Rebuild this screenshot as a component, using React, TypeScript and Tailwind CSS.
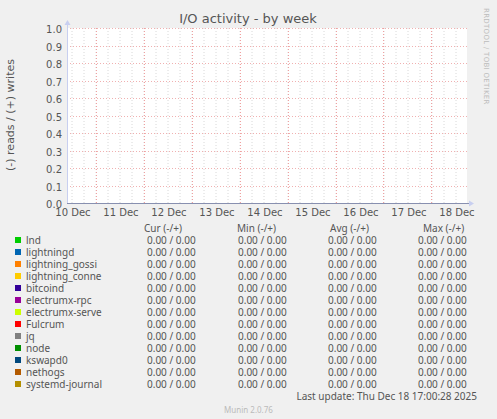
const rows: [string, string][] = [
  ["lnd", "#00cc00"],
  ["lightningd", "#0066b3"],
  ["lightning_gossi", "#ff8000"],
  ["lightning_conne", "#ffcc00"],
  ["bitcoind", "#330099"],
  ["electrumx-rpc", "#990099"],
  ["electrumx-serve", "#ccff00"],
  ["Fulcrum", "#ff0000"],
  ["jq", "#808080"],
  ["node", "#008f00"],
  ["kswapd0", "#00487d"],
  ["nethogs", "#b35a00"],
  ["systemd-journal", "#b38f00"],
];

const days = ["10 Dec", "11 Dec", "12 Dec", "13 Dec", "14 Dec", "15 Dec", "16 Dec", "17 Dec", "18 Dec"];

function Chart() {
  const left = 67;
  const right = 467;
  const top = 28;
  const bottom = 203;
  const step = (bottom - top) / 10;
  const minor: number[] = [];
  for (let x = 72; x < right; x += 12) minor.push(x);
  const major: number[] = [];
  for (let x = 96; x < right; x += 47.9) major.push(x);
  return (
    <svg width="497" height="220" className="block" fontFamily="'DejaVu Sans', sans-serif">
      <text x="248" y="23" textAnchor="middle" fontSize="13" fill="#555">I/O activity - by week</text>
      <text transform="translate(14 115) rotate(-90)" textAnchor="middle" fontSize="11" fill="#555">
        (-) reads / (+) writes
      </text>
      <text transform="translate(484 8) rotate(90)" fontSize="7" fill="#bbb" letterSpacing="0.3">
        RRDTOOL / TOBI OETIKER
      </text>
      <rect x={left} y={top} width={right - left} height={bottom - top} fill="#fff" />
      {minor.map((x) => (
        <line key={"m" + x} x1={x} x2={x} y1={top} y2={bottom} stroke="#d8d8d8" strokeWidth="1" strokeDasharray="1 2" />
      ))}
      {major.map((x) => (
        <line key={"d" + x} x1={Math.round(x) + 0.5} x2={Math.round(x) + 0.5} y1={top} y2={bottom} stroke="#f0a0a0" strokeDasharray="1 2" />
      ))}
      {Array.from({ length: 11 }, (_, i) => {
        const y = Math.round(bottom - i * step) + 0.5;
        return (
          <g key={i}>
            {i > 0 && <line x1={left} x2={right} y1={y} y2={y} stroke="#f0b0b0" strokeDasharray="1 2" />}
            <text x="62" y={y + 4} textAnchor="end" fontSize="10" fill="#555">
              {(i / 10).toFixed(1)}
            </text>
          </g>
        );
      })}
      <line x1={left + 0.5} x2={left + 0.5} y1={top - 4} y2={bottom} stroke="#c8cff0" />
      <line x1={left} x2={right + 3} y1={bottom + 0.5} y2={bottom + 0.5} stroke="#8890b0" />
      <polygon points={`${left - 2.5},${top - 3} ${left + 3.5},${top - 3} ${left + 0.5},${top - 8}`} fill="#c8cff0" />
      <polygon points={`${right + 2},${bottom - 2.5} ${right + 2},${bottom + 3.5} ${right + 7},${bottom + 0.5}`} fill="#c8cff0" />
      {days.map((d, i) => (
        <text key={d} x={73 + i * 48} y="216" textAnchor="middle" fontSize="10" fill="#555">
          {d}
        </text>
      ))}
    </svg>
  );
}

export default function App() {
  const v = "0.00 / 0.00";
  return (
    <div className="w-[497px] h-[419px] bg-[#f0f0f0] overflow-hidden">
      <Chart />
      <div className="font-['DejaVu_Sans_Mono'] text-[10px] leading-[12px] text-[#555] whitespace-pre mt-[2px]">
        <div className="flex">
          <span className="w-[144px]" />
          <span className="w-[93px]">Cur (-/+)</span>
          <span className="w-[93px]">Min (-/+)</span>
          <span className="w-[93px]">Avg (-/+)</span>
          <span>Max (-/+)</span>
        </div>
        {rows.map(([name, color]) => (
          <div key={name} className="flex items-center">
            <span className="ml-[15px] mr-[5px] w-[6px] h-[6px] shrink-0" style={{ backgroundColor: color }} />
            <span className="w-[121px]">{name}</span>
            <span className="w-[91px]">{v}</span>
            <span className="w-[90px]">{v}</span>
            <span className="w-[90px]">{v}</span>
            <span>{v}</span>
          </div>
        ))}
        <div className="text-right pr-[20px]">Last update: Thu Dec 18 17:00:28 2025</div>
      </div>
      <div className="text-center text-[8px] text-[#bbb] font-['DejaVu_Sans'] mt-[2px]">Munin 2.0.76</div>
    </div>
  );
}
